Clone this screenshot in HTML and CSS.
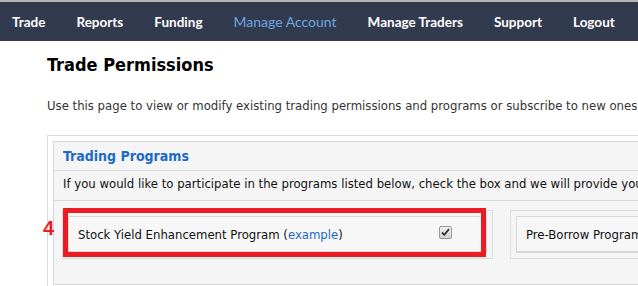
FILE: index.html
```html
<!DOCTYPE html>
<html lang="en">
<head>
  <meta charset="UTF-8">
  <title>Trade Permissions</title>
  <link rel="stylesheet" href="styles.css">
</head>
<body>
  <div class="topnav">
    <a href="#">Trade</a>
    <a href="#">Reports</a>
    <a href="#">Funding</a>
    <a href="#" class="active">Manage Account</a>
    <a href="#">Manage Traders</a>
    <a href="#">Support</a>
    <a href="#">Logout</a>
  </div>

  <div class="content">
    <h1>Trade Permissions</h1>
    <p class="intro">Use this page to view or modify existing trading permissions and programs or subscribe to new ones</p>

    <div class="outer">
      <div class="panel">
        <div class="panel-head">Trading Programs</div>
        <div class="panel-note">If you would like to participate in the programs listed below, check the box and we will provide you</div>
        <div class="programs">
          <div class="prog prog-first">
            <span class="step">4</span>
            <div class="prog-inner">
              <span>Stock Yield Enhancement Program (<a href="#">example</a>)</span>
              <span class="check"><svg width="9" height="8" viewBox="0 0 9 8"><path d="M1 4.5 L3.3 6.8 L8 1.2" fill="none" stroke="#333" stroke-width="1.8"/></svg></span>
            </div>
            <div class="mark"></div>
          </div>
          <div class="prog">
            <div class="prog-inner">
              <span>Pre-Borrow Program</span>
            </div>
          </div>
        </div>
      </div>
    </div>
  </div>
</body>
</html>
```

FILE: styles.css
```css
body {
  margin: 0;
  padding: 0;
  overflow: hidden;
  background: #fff;
  font-family: "DejaVu Sans Condensed", "DejaVu Sans", sans-serif;
}

.topnav {
  border-top: 2px solid #b4b4b4;
  background: #323a4e;
  height: 39px;
  display: flex;
  align-items: center;
  gap: 31px;
  padding-left: 12px;
  white-space: nowrap;
}
.topnav a {
  color: #fff;
  text-decoration: none;
  font-family: "Lato", sans-serif;
  font-size: 13.5px;
  font-weight: 700;
}
.topnav a.active {
  color: #6fa6e2;
  font-weight: 400;
  font-size: 14px;
}

.content {
  padding-left: 47px;
}

h1 {
  margin: 0;
  padding-top: 13px;
  font-size: 18px;
  font-weight: bold;
  color: #000;
  line-height: 22px;
}

.intro {
  margin: 22px 0 0;
  font-size: 13px;
  line-height: 16px;
  color: #333;
  white-space: nowrap;
}

.outer {
  margin-top: 21px;
  border: 1px solid #dcdcdc;
  padding: 5px;
  width: 620px;
}

.panel {
  background: #f5f5f5;
  border: 1px solid #d8d8d8;
  height: 142px;
}

.panel-head {
  padding: 6px 9px;
  font-size: 14px;
  font-weight: bold;
  color: #1d6ac8;
  line-height: 16px;
  border-bottom: 1px solid #d8d8d8;
}

.panel-note {
  padding: 5px 9px 8px;
  font-size: 13px;
  line-height: 16px;
  color: #111;
  white-space: nowrap;
  border-bottom: 1px solid #d8d8d8;
}

.programs {
  display: flex;
  gap: 17px;
  padding: 9px 0 0 8px;
}

.prog {
  position: relative;
  border: 1px solid #dcdcdc;
  padding: 5px;
  flex: none;
}
.prog-first {
  width: 419px;
}
.prog + .prog {
  width: 200px;
}

.prog-inner {
  display: flex;
  justify-content: space-between;
  align-items: center;
  border: 1px solid #d8d8d8;
  border-bottom-width: 2px;
  background: #f7f7f7;
  height: 34px;
  padding: 0 34px 0 9px;
  font-size: 13px;
  color: #111;
  white-space: nowrap;
}
.prog-inner a {
  color: #1d6ac8;
  text-decoration: none;
}

.check {
  width: 11px;
  height: 11px;
  margin-bottom: 4px;
  border: 1px solid #9a9a9a;
  border-radius: 2px;
  background: linear-gradient(#f2f2f2, #d4d4d4);
  display: flex;
  align-items: center;
  justify-content: center;
}

.mark {
  position: absolute;
  left: 0;
  top: -3px;
  width: 413px;
  height: 39px;
  border: 5px solid #ed1c24;
}

.step {
  position: absolute;
  left: -20px;
  top: 6px;
  font-family: "Liberation Sans", sans-serif;
  font-weight: bold;
  font-size: 20px;
  color: #ed1c24;
}
```
